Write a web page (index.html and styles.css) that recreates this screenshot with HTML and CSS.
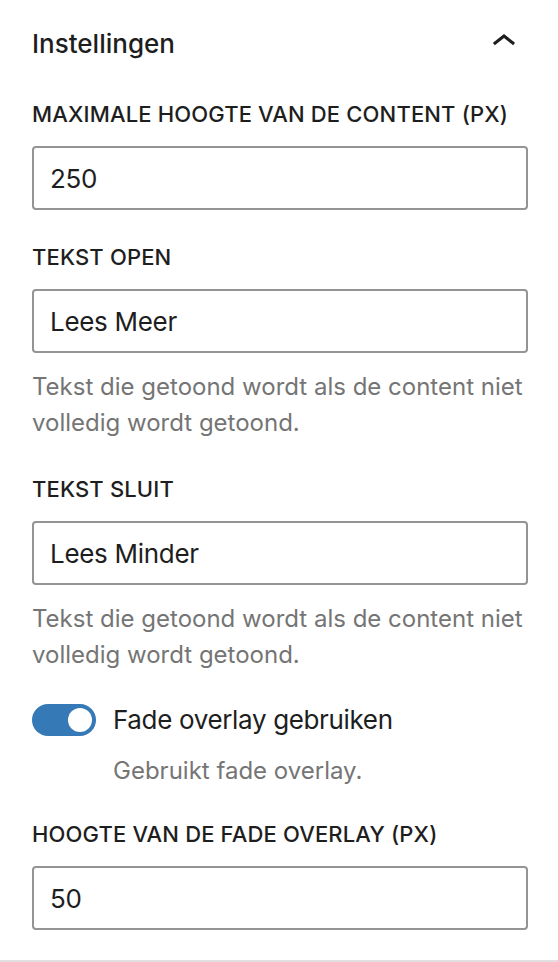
FILE: index.html
```html
<!DOCTYPE html>
<html lang="nl">
<head>
<meta charset="utf-8">
<title>Instellingen</title>
<link rel="stylesheet" href="styles.css">
</head>
<body>
<div class="panel">
  <div class="panel-header">
    <h2 class="panel-title">Instellingen</h2>
    <svg class="chevron" width="48" height="48" viewBox="0 0 24 24" aria-hidden="true"><path d="M6.5 12.4L12 8l5.5 4.4-.9 1.2L12 10l-4.6 3.6-1-1.2z"/></svg>
  </div>
  <div class="panel-body">
    <div class="field">
      <label class="field-label">Maximale hoogte van de content (px)</label>
      <input class="field-input" type="text" value="250">
    </div>
    <div class="field">
      <label class="field-label">Tekst open</label>
      <input class="field-input" type="text" value="Lees Meer">
      <p class="help">Tekst die getoond wordt als de content niet volledig wordt getoond.</p>
    </div>
    <div class="field">
      <label class="field-label">Tekst sluit</label>
      <input class="field-input" type="text" value="Lees Minder">
      <p class="help">Tekst die getoond wordt als de content niet volledig wordt getoond.</p>
    </div>
    <div class="field toggle-field">
      <div class="toggle-row">
        <span class="toggle"><span class="toggle-thumb"></span></span>
        <span class="toggle-label">Fade overlay gebruiken</span>
      </div>
      <p class="help toggle-help">Gebruikt fade overlay.</p>
    </div>
    <div class="field last">
      <label class="field-label">Hoogte van de fade overlay (px)</label>
      <input class="field-input" type="text" value="50">
    </div>
  </div>
</div>
</body>
</html>
```
FILE: styles.css
```css
* { box-sizing: border-box; }
html, body { margin: 0; padding: 0; background: #fff; }
body {
  font-family: Inter, "Noto Sans", Roboto, sans-serif;
  color: #1e1e1e;
  -webkit-font-smoothing: antialiased;
}
.panel {
  height: 962px;
  border-bottom: 2px solid #e0e0e0;
}
.panel-header {
  height: 88px;
  padding: 0 30px 0 32px;
  display: flex;
  align-items: center;
  justify-content: space-between;
}
.panel-title {
  margin: 0;
  font-size: 26px;
  font-weight: 500;
  line-height: 32px;
}
.chevron { fill: #1e1e1e; display: block; margin-top: -4px; }
.panel-body {
  padding: 12px 30px 0 32px;
  display: flex;
  flex-direction: column;
}
.field { display: flex; flex-direction: column; margin-bottom: 33px; }
.field-label {
  font-size: 22px;
  font-weight: 500;
  line-height: 28px;
  letter-spacing: 0.15px;
  text-transform: uppercase;
  margin-bottom: 18px;
}
.field-input {
  height: 64px;
  width: 100%;
  border: 2px solid #949494;
  border-radius: 4px;
  padding: 0 16px;
  font-family: inherit;
  font-size: 26px;
  letter-spacing: -0.3px;
  color: #1e1e1e;
  background: #fff;
  outline: none;
}
.help {
  margin: 16px 0 0;
  font-size: 24px;
  line-height: 36px;
  color: #757575;
}
.field.has-help, .field:has(.help) { margin-bottom: 34px; }
.field.toggle-field { margin-top: -5px; margin-bottom: 31px; }
.toggle-row { display: flex; align-items: center; height: 36px; }
.toggle {
  position: relative;
  width: 64px;
  height: 32px;
  border-radius: 16px;
  background: #3579b7;
  flex: none;
}
.toggle-thumb {
  position: absolute;
  left: 36px;
  top: 4px;
  width: 24px;
  height: 24px;
  border-radius: 50%;
  background: #fff;
}
.toggle-label {
  margin-left: 17px;
  font-size: 26px;
  line-height: 36px;
  letter-spacing: -0.35px;
}
.toggle-help { margin: 15px 0 0 81px; }
.field.last { margin-bottom: 0; }
```
